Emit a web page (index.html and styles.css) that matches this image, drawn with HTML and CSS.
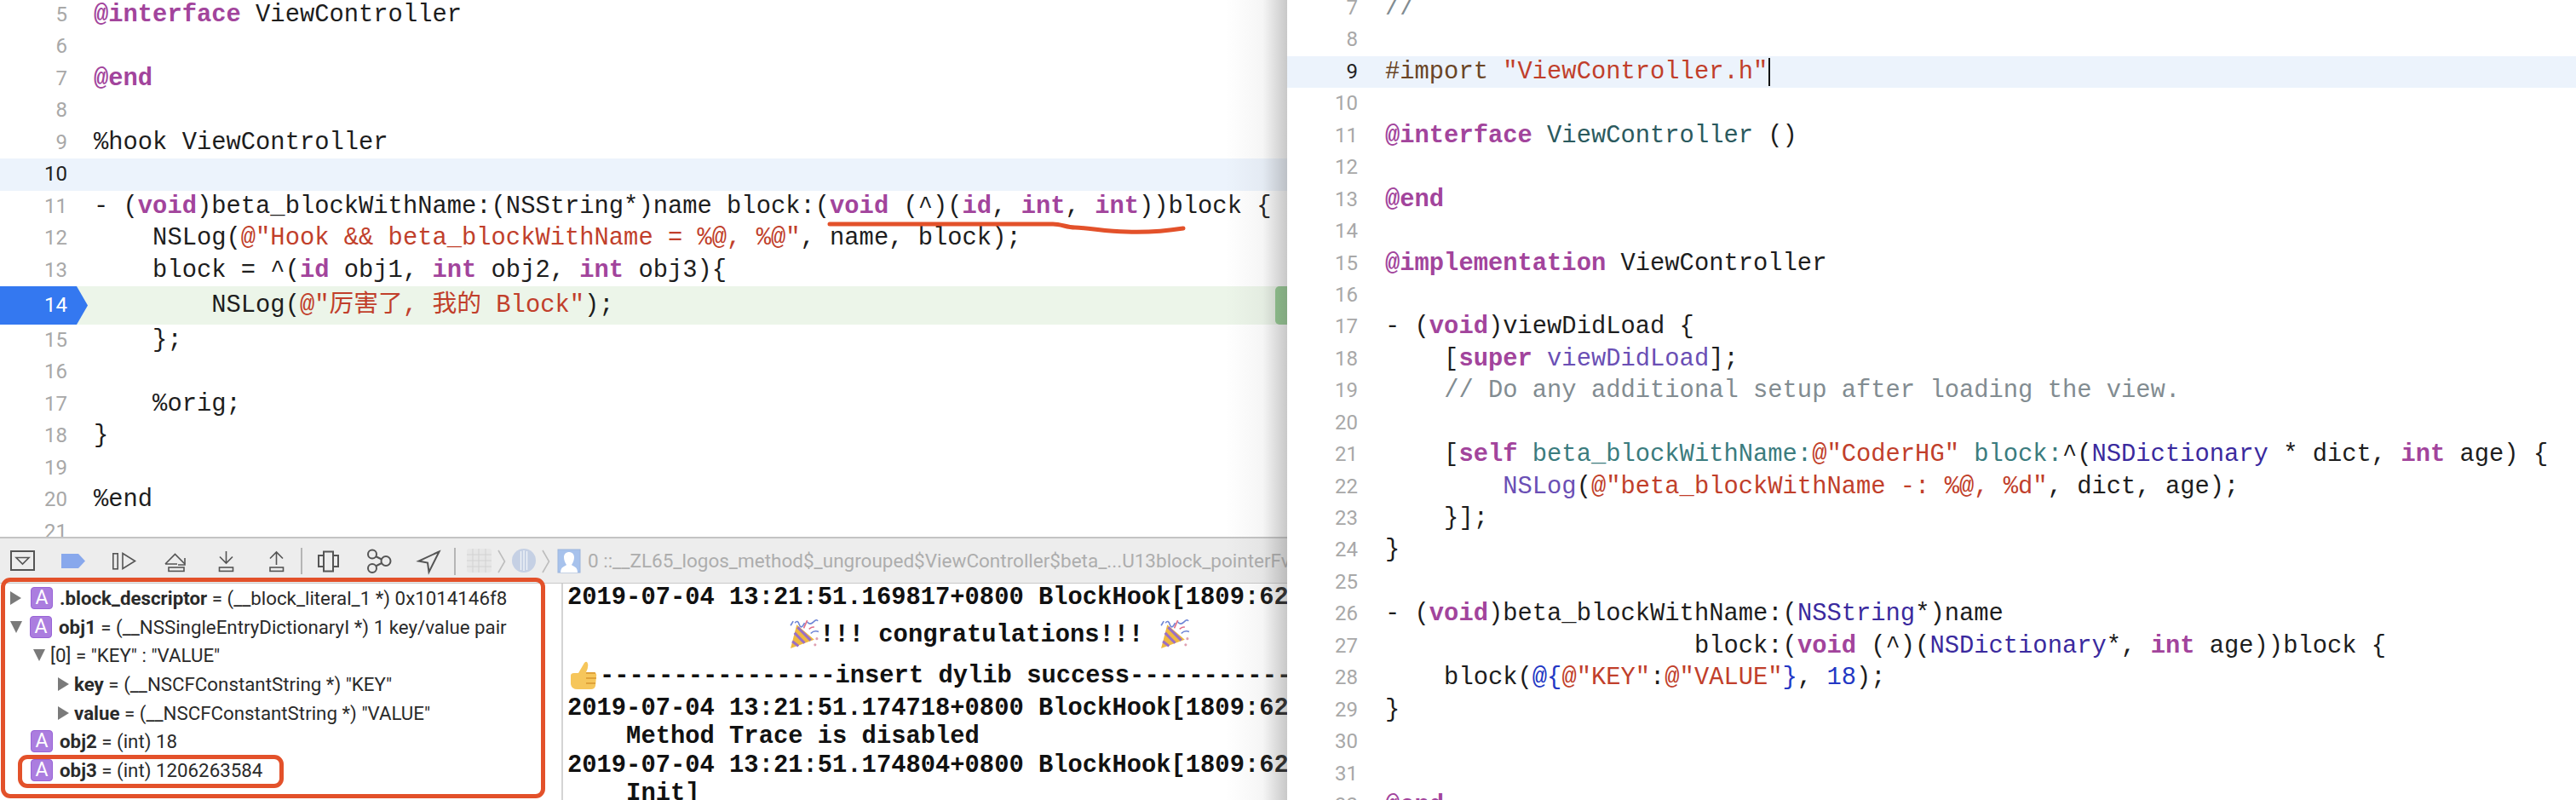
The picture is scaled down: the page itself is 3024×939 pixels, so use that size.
FILE: index.html
```html
<!DOCTYPE html>
<html lang="en">
<head>
<meta charset="utf-8">
<title>BlockHook</title>
<link rel="stylesheet" href="styles.css">
</head>
<body>
<div class="screen">
  <section class="left">
    <div class="editor editor-left">
      <div class="row"><span class="num">5</span><span class="code"><span class="k">@interface</span> ViewController</span></div>
      <div class="row"><span class="num">6</span></div>
      <div class="row"><span class="num">7</span><span class="code"><span class="k">@end</span></span></div>
      <div class="row"><span class="num">8</span></div>
      <div class="row"><span class="num">9</span><span class="code">%hook ViewController</span></div>
      <div class="row row-cur"><span class="num">10</span></div>
      <div class="row"><span class="num">11</span><span class="code">- (<span class="k">void</span>)beta_blockWithName:(NSString*)name block:(<span class="k">void</span> (^)(<span class="k">id</span>, <span class="k">int</span>, <span class="k">int</span>))block {</span></div>
      <div class="row"><span class="num">12</span><span class="code">    NSLog(<span class="s">@"Hook &amp;&amp; beta_blockWithName = %@, %@"</span>, name, block);</span></div>
      <div class="row"><span class="num">13</span><span class="code">    block = ^(<span class="k">id</span> obj1, <span class="k">int</span> obj2, <span class="k">int</span> obj3){</span></div>
      <div class="row row-stop"><span class="num num-stop">14</span><span class="code">        NSLog(<span class="s">@"厉害了, 我的 Block"</span>);</span><span class="stop-mark"></span></div>
      <div class="row"><span class="num">15</span><span class="code">    };</span></div>
      <div class="row"><span class="num">16</span></div>
      <div class="row"><span class="num">17</span><span class="code">    %orig;</span></div>
      <div class="row"><span class="num">18</span><span class="code">}</span></div>
      <div class="row"><span class="num">19</span></div>
      <div class="row"><span class="num">20</span><span class="code">%end</span></div>
      <div class="row"><span class="num">21</span></div>
    </div>

    <div class="debug">
      <div class="toolbar">
        <svg class="tool-icons" width="688" height="53" viewBox="0 0 688 53" fill="none" stroke="#555" stroke-width="2">
          <rect x="13" y="15" width="27" height="22"/>
          <path d="M19 22.5H34L26.5 30Z" stroke-width="1.6"/>
          <path d="M72 18H92L100 26.5L92 35H72Z" fill="#88a8ec" stroke="none"/>
          <rect x="132.8" y="17.8" width="5.4" height="18" stroke-width="1.6"/>
          <path d="M144 17.5L158.5 26.5L144 35.5Z" stroke-width="1.6"/>
          <path d="M194 30L205.5 18.5L217 30M194 30H208" stroke-width="1.6"/>
          <path d="M217 23V31H209" stroke-width="1.6"/>
          <rect x="198" y="34" width="18" height="4.4" stroke-width="1.6"/>
          <path d="M265.5 15V29M258 21.5L265.5 29L273 21.5" stroke-width="1.6"/>
          <rect x="257.5" y="34" width="16" height="4.4" stroke-width="1.6"/>
          <path d="M324.5 16V31M317 23.5L324.5 16L332 23.5" stroke-width="1.6"/>
          <rect x="317" y="34" width="15.5" height="4.4" stroke-width="1.6"/>
          <path d="M354 11V42" stroke="#b5b5b5"/>
          <rect x="380" y="15.5" width="11" height="23"/>
          <path d="M380 20H374V33H380M391 20H397V33H391"/>
          <circle cx="437" cy="18.5" r="5"/>
          <circle cx="453" cy="26.5" r="5.5"/>
          <circle cx="437" cy="35" r="5"/>
          <path d="M441 21L448 24.5M441 32.5L448 29"/>
          <path d="M515.5 15.5L491.5 26.5L502 28.5L503.5 39.5Z"/>
          <path d="M534 11V43" stroke="#b5b5b5"/>
          <rect x="548" y="12" width="29" height="28" rx="3" fill="#e6e6e6" stroke="none"/>
          <path d="M548 19H577M548 26H577M548 33H577M555 12V40M562 12V40M570 12V40" stroke="#d2d2d2" stroke-width="1"/>
          <path d="M585 14L592.5 27L585 40" stroke="#bdbdbd" stroke-width="1.6"/>
          <circle cx="615" cy="26" r="14" fill="#c5d0e4" stroke="none"/>
          <path d="M611.5 15V37M615 14V38M618.5 15V37" stroke="#f2f4f8" stroke-width="1.3"/>
          <path d="M637 14L644.5 27L637 40" stroke="#bdbdbd" stroke-width="1.6"/>
          <rect x="655" y="13" width="26" height="27" fill="#a7c2ec" stroke="#9db5dc" stroke-width="1"/>
          <path d="M658 40C658 33 663 33 665 31C663 28 662 25 662 22C662 18 665 16 668 16C671 16 674 18 674 22C674 25 673 28 671 31C673 33 678 33 678 40Z" fill="#fff" stroke="none"/>
        </svg>
        <span class="frame-name">0 ::__ZL65_logos_method$_ungrouped$ViewController$beta_...U13block_pointerFv</span>
      </div>
      <div class="panes">
        <div class="vars">
          <div class="var v0"><i class="tri tri-right"></i><b class="badge">A</b><span><b>.block_descriptor</b> = (__block_literal_1 *) 0x1014146f8</span></div>
          <div class="var v0"><i class="tri tri-down"></i><b class="badge">A</b><span><b>obj1</b> = (__NSSingleEntryDictionaryI *) 1 key/value pair</span></div>
          <div class="var v1"><i class="tri tri-down tri-tight"></i><span>[0] = "KEY" : "VALUE"</span></div>
          <div class="var v2"><i class="tri tri-right tri-tight"></i><span><b>key</b> = (__NSCFConstantString *) "KEY"</span></div>
          <div class="var v2"><i class="tri tri-right tri-tight"></i><span><b>value</b> = (__NSCFConstantString *) "VALUE"</span></div>
          <div class="var v0"><i class="tri tri-none"></i><b class="badge">A</b><span><b>obj2</b> = (int) 18</span></div>
          <div class="var v0"><i class="tri tri-none"></i><b class="badge">A</b><span><b>obj3</b> = (int) 1206263584</span></div>
        </div>
        <div class="console">
          <div class="log">2019-07-04 13:21:51.169817+0800 BlockHook[1809:62</div>
          <div class="log log-party">               <svg class="emoji party" viewBox="0 0 36 36"><path d="M3 34L10 7L30 24Z" fill="#f0b93f"/><path d="M7.5 16.5L19 28M5 26L12 31.5M11 10L26 25" stroke="#9a6fc4" stroke-width="3" fill="none"/><path d="M8 5Q11 1 13 7T19 5M22 4Q25 8 29 4T34 3M26 17Q30 13 35 15M3 8L6 3" stroke="#6f86d6" stroke-width="1.6" fill="none"/><path d="M18 11L22 2M24 12Q28 9 30 10" stroke="#e0708a" stroke-width="1.6" fill="none"/><circle cx="33" cy="23" r="1.5" fill="#e0a0b0"/><circle cx="31" cy="30" r="1.5" fill="#e0a0b0"/></svg>!!! congratulations!!! <svg class="emoji party" viewBox="0 0 36 36"><path d="M3 34L10 7L30 24Z" fill="#f0b93f"/><path d="M7.5 16.5L19 28M5 26L12 31.5M11 10L26 25" stroke="#9a6fc4" stroke-width="3" fill="none"/><path d="M8 5Q11 1 13 7T19 5M22 4Q25 8 29 4T34 3M26 17Q30 13 35 15M3 8L6 3" stroke="#6f86d6" stroke-width="1.6" fill="none"/><path d="M18 11L22 2M24 12Q28 9 30 10" stroke="#e0708a" stroke-width="1.6" fill="none"/><circle cx="33" cy="23" r="1.5" fill="#e0a0b0"/><circle cx="31" cy="30" r="1.5" fill="#e0a0b0"/></svg></div>
          <div class="log log-thumb"><svg class="emoji thumb" viewBox="0 0 32 34"><path d="M1 17Q1 14 5 14H10L17 2Q20 -1 21 3Q22 7 19 13H28Q32 14 31 18L30 29Q29 33 25 33H9Q2 33 1 27Z" fill="#f6c65b"/><path d="M19 14H30M19 20H31M19 26H30" stroke="#d9962f" stroke-width="1.4" fill="none"/></svg>----------------insert dylib success------------</div>
          <div class="log">2019-07-04 13:21:51.174718+0800 BlockHook[1809:62</div>
          <div class="log">    Method Trace is disabled</div>
          <div class="log">2019-07-04 13:21:51.174804+0800 BlockHook[1809:62</div>
          <div class="log">    Init]</div>
        </div>
        <div class="callout callout-all"></div>
        <div class="callout callout-obj3"></div>
      </div>
    </div>

    <svg class="scribble" width="500" height="30" viewBox="960 255 500 30" fill="none">
      <path d="M974 263H1236C1246 263 1252 267 1262 267C1282 268 1300 272 1322 272C1350 273 1370 271 1389 268" stroke="#e3512a" stroke-width="5" stroke-linecap="round"/>
    </svg>
  </section>

  <section class="right">
    <div class="editor editor-right">
      <div class="row"><span class="num">7</span><span class="code"><span class="c">//</span></span></div>
      <div class="row"><span class="num">8</span></div>
      <div class="row row-cur"><span class="num">9</span><span class="code"><span class="p">#import</span> <span class="s">"ViewController.h"</span><i class="caret"></i></span></div>
      <div class="row"><span class="num">10</span></div>
      <div class="row"><span class="num">11</span><span class="code"><span class="k">@interface</span> <span class="t">ViewController</span> ()</span></div>
      <div class="row"><span class="num">12</span></div>
      <div class="row"><span class="num">13</span><span class="code"><span class="k">@end</span></span></div>
      <div class="row"><span class="num">14</span></div>
      <div class="row"><span class="num">15</span><span class="code"><span class="k">@implementation</span> ViewController</span></div>
      <div class="row"><span class="num">16</span></div>
      <div class="row"><span class="num">17</span><span class="code">- (<span class="k">void</span>)viewDidLoad {</span></div>
      <div class="row"><span class="num">18</span><span class="code">    [<span class="k">super</span> <span class="m">viewDidLoad</span>];</span></div>
      <div class="row"><span class="num">19</span><span class="code">    <span class="c">// Do any additional setup after loading the view.</span></span></div>
      <div class="row"><span class="num">20</span></div>
      <div class="row"><span class="num">21</span><span class="code">    [<span class="k">self</span> <span class="t2">beta_blockWithName:</span><span class="s">@"CoderHG"</span> <span class="t2">block:</span>^(<span class="n">NSDictionary</span> * dict, <span class="k">int</span> age) {</span></div>
      <div class="row"><span class="num">22</span><span class="code">        <span class="m">NSLog</span>(<span class="s">@"beta_blockWithName -: %@, %d"</span>, dict, age);</span></div>
      <div class="row"><span class="num">23</span><span class="code">    }];</span></div>
      <div class="row"><span class="num">24</span><span class="code">}</span></div>
      <div class="row"><span class="num">25</span></div>
      <div class="row"><span class="num">26</span><span class="code">- (<span class="k">void</span>)beta_blockWithName:(<span class="n">NSString</span>*)name</span></div>
      <div class="row"><span class="num">27</span><span class="code">                     block:(<span class="k">void</span> (^)(<span class="n">NSDictionary</span>*, <span class="k">int</span> age))block {</span></div>
      <div class="row"><span class="num">28</span><span class="code">    block(<span class="b">@{</span><span class="s">@"KEY"</span>:<span class="s">@"VALUE"</span><span class="b">}</span>, <span class="b">18</span>);</span></div>
      <div class="row"><span class="num">29</span><span class="code">}</span></div>
      <div class="row"><span class="num">30</span></div>
      <div class="row"><span class="num">31</span></div>
      <div class="row"><span class="num">32</span><span class="code"><span class="k">@end</span></span></div>
    </div>
  </section>
</div>
</body>
</html>
```
FILE: styles.css
```css
html, body {
  margin: 0;
  padding: 0;
  background: #fff;
  overflow: hidden;
}
.screen {
  display: flex;
  width: 3024px;
  height: 939px;
  overflow: hidden;
  color: #1d1d1d;
}
.left {
  position: relative;
  width: 1511px;
  flex: none;
  display: flex;
  flex-direction: column;
}
.left::after {
  content: "";
  position: absolute;
  top: 0;
  right: 0;
  bottom: 0;
  width: 72px;
  background: linear-gradient(to right, rgba(120,120,120,0), rgba(120,120,120,.07) 60%, rgba(110,110,110,.38));
  pointer-events: none;
}
.right {
  flex: 1;
  min-width: 0;
  overflow: hidden;
}
.editor {
  font-family: "Liberation Mono", "Noto Sans CJK SC", monospace;
  font-size: 28.8px;
}
.editor-left {
  height: 631px;
  overflow: hidden;
  margin-top: -1px;
}
.editor-right {
  margin-top: -9px;
}
.row {
  display: flex;
  height: 37.45px;
  line-height: 37.45px;
  white-space: pre;
}
.num {
  flex: none;
  width: 79px;
  margin-right: 31px;
  text-align: right;
  font-family: Roboto, sans-serif;
  font-size: 24px;
  color: #a8a8a8;
}
.editor-right .num {
  width: 83px;
  margin-right: 32px;
}
.code {
  flex: none;
}
.row-cur {
  background: #ecf3fc;
}
.row-cur .num {
  color: #222;
}
.row-stop {
  height: 45px;
  line-height: 45px;
  background: #ecf5e9;
}
.num-stop {
  width: 79px;
  padding-right: 24px;
  margin-right: 7px;
  color: #fff;
  background: #3478f0;
  clip-path: polygon(0 0, 90px 0, 103px 50%, 90px 100%, 0 100%);
}
.stop-mark {
  margin-left: auto;
  flex: none;
  width: 14px;
  border-radius: 5px 0 0 5px;
  background: #8fcb8c;
}
.k { color: #a2449c; font-weight: 700; }
.s { color: #c13f2b; }
.c { color: #828c91; }
.p { color: #6a4526; }
.t { color: #2b5a5e; }
.t2 { color: #3b7c7e; }
.m { color: #6a4fb5; }
.n { color: #3a2a9e; }
.b { color: #2338c4; }
.caret {
  display: inline-block;
  width: 2px;
  height: 33px;
  margin-left: 1px;
  background: #111;
  vertical-align: middle;
}

.debug {
  position: relative;
  flex: 1;
  min-height: 0;
  display: flex;
  flex-direction: column;
}
.toolbar {
  flex: none;
  box-sizing: border-box;
  height: 55px;
  display: flex;
  align-items: center;
  overflow: hidden;
  white-space: nowrap;
  background: #ededed;
  border-top: 2px solid #c4c4c4;
  border-bottom: 1px solid #c9c9c9;
}
.tool-icons {
  flex: none;
  display: block;
  margin-right: 2px;
}
.frame-name {
  font-family: Roboto, sans-serif;
  font-size: 22.5px;
  color: #adadad;
}
.panes {
  position: relative;
  flex: 1;
  min-height: 0;
  display: flex;
}
.vars {
  flex: none;
  box-sizing: border-box;
  width: 661px;
  border-right: 2px solid #d4d4d4;
  font-family: Roboto, sans-serif;
  font-size: 22.3px;
  color: #2a2a2a;
}
.var {
  display: flex;
  align-items: center;
  height: 33.7px;
  white-space: pre;
}
.v0 { padding-left: 12px; }
.v1 { padding-left: 39px; }
.v2 { padding-left: 68px; }
.tri {
  flex: none;
  display: block;
  width: 0;
  height: 0;
  margin-right: 11px;
}
.tri-right {
  border-top: 8px solid transparent;
  border-bottom: 8px solid transparent;
  border-left: 13px solid #7a7a7a;
}
.tri-down {
  border-left: 7.5px solid transparent;
  border-right: 7.5px solid transparent;
  border-top: 14px solid #7a7a7a;
  margin-right: 9px;
}
.tri-none {
  width: 13px;
}
.tri-tight {
  margin-right: 6px;
}
.badge {
  flex: none;
  box-sizing: border-box;
  width: 26px;
  height: 26px;
  margin-right: 8px;
  border: 1px solid #9863d6;
  border-radius: 4px;
  background: #ab7ddf;
  color: #fff;
  font-size: 23px;
  font-weight: 400;
  line-height: 24px;
  text-align: center;
}
.console {
  flex: 1;
  min-width: 0;
  overflow: hidden;
  padding-left: 5px;
  font-family: "Liberation Mono", monospace;
  font-size: 28.8px;
  font-weight: 700;
  color: #111;
}
.log {
  height: 33.6px;
  line-height: 33.6px;
  white-space: pre;
}
.log-party {
  height: 53px;
  line-height: 53px;
}
.log-thumb {
  height: 43px;
  line-height: 43px;
}
.emoji {
  display: inline-block;
  vertical-align: middle;
}
.party {
  width: 37px;
  height: 37px;
}
.thumb {
  width: 32px;
  height: 34px;
  margin: 0 3px;
}
.callout {
  position: absolute;
  box-sizing: border-box;
  border: 5px solid #e3512a;
  border-radius: 11px;
  pointer-events: none;
}
.callout-all {
  left: 1px;
  top: -7px;
  width: 639px;
  height: 259px;
}
.callout-obj3 {
  left: 21px;
  top: 201px;
  width: 312px;
  height: 39px;
}
.scribble {
  position: absolute;
  left: 960px;
  top: 255px;
  z-index: 2;
  pointer-events: none;
}
```
